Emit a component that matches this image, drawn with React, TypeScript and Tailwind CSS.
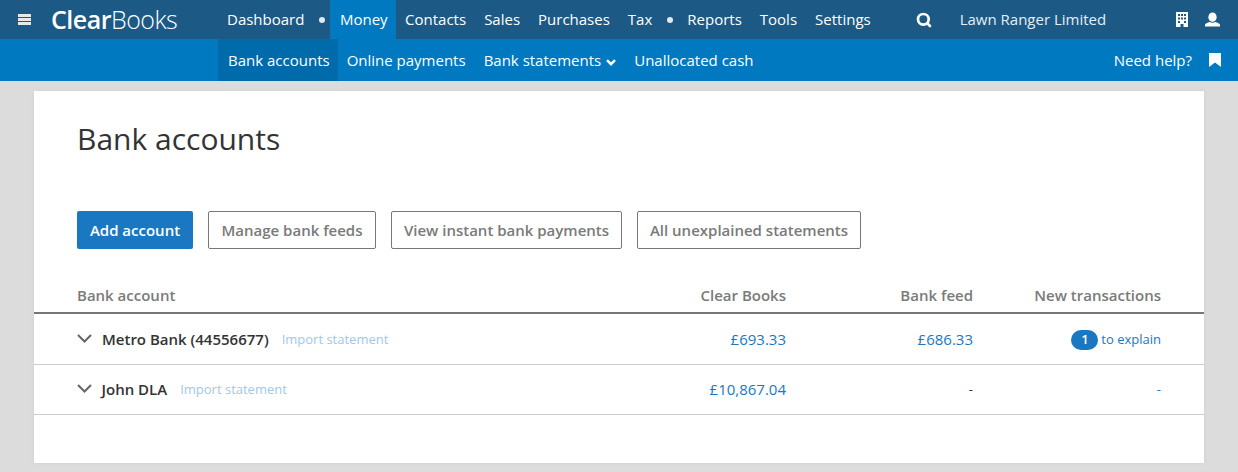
import { Search } from 'lucide-react';

const mainNav = [
  { label: 'Dashboard', dot: true },
  { label: 'Money', active: true },
  { label: 'Contacts' },
  { label: 'Sales' },
  { label: 'Purchases' },
  { label: 'Tax', dot: true },
  { label: 'Reports' },
  { label: 'Tools' },
  { label: 'Settings' },
];

function BuildingIcon() {
  return (
    <svg width="12" height="15" viewBox="0 0 12 15" fill="#fff">
      <path d="M0 0h12v15H7.500v-3h-3v3H0z M2 2v2h2V2z M5 2v2h2V2z M8 2v2h2V2z M2 5.500v2h2v-2z M5 5.500v2h2v-2z M8 5.500v2h2v-2z M2 9v2h2V9z M8 9v2h2V9z" fillRule="evenodd" />
    </svg>
  );
}

function UserIcon() {
  return (
    <svg width="15" height="15" viewBox="0 0 16 15" fill="#fff">
      <ellipse cx="8" cy="5" rx="4.400" ry="5" />
      <path d="M0 15v-1.600c0-1.600 2.600-2.600 5-3.200 1.800 1 4.200 1 6 0 2.400.6 5 1.600 5 3.200V15z" />
    </svg>
  );
}

function BookmarkIcon() {
  return (
    <svg width="12" height="14" viewBox="0 0 12 14" fill="#fff">
      <path d="M0 0h12v14L6 9.500 0 14z" />
    </svg>
  );
}

function Caret({ className }: { className?: string }) {
  return (
    <svg width="10" height="7" viewBox="0 0 10 7" fill="none" stroke="#fff" strokeWidth="2.400" className={className}>
      <path d="M1 1.200l4 4 4-4" />
    </svg>
  );
}

function RowChevron() {
  return (
    <svg width="15" height="9" viewBox="0 0 15 9" fill="none" stroke="#666" strokeWidth="2" className="mb-[3px] shrink-0">
      <path d="M1 1l6.500 6.500L14 1" />
    </svg>
  );
}

export default function App() {
  return (
    <div className="h-[472px] w-[1238px] overflow-hidden bg-[#dcdcdc] font-['Open_Sans',sans-serif] text-[15px]">
      {/* Top nav */}
      <header className="flex h-[39px] items-center bg-[#1c5a85] text-white">
        <div className="flex w-[218px] items-center pl-[18px]">
          <div className="flex w-[13px] flex-col gap-[1px]">
            <span className="h-[3px] bg-[#e8e8e8]" />
            <span className="h-[3px] bg-[#e8e8e8]" />
            <span className="h-[3px] bg-[#e8e8e8]" />
          </div>
          <span className="ml-[20px] text-[25px] leading-none tracking-[-0.5px]">
            <span className="font-semibold">Clear</span>
            <span className="font-light">Books</span>
          </span>
        </div>
        <nav className="flex h-full items-center">
          {mainNav.map((item) => (
            <div key={item.label} className="flex h-full items-center">
              <a className={item.active ? 'flex h-full items-center bg-[#0079c1] pl-[9.500px] pr-[8.500px]' : 'flex h-full items-center px-[9px]'}>
                {item.label}
              </a>
              {item.dot && <span className="ml-[6px] mr-[5px] h-[6px] w-[6px] rounded-full bg-[#dfe9f0]" />}
            </div>
          ))}
        </nav>
        <Search className="ml-[36px] h-[16px] w-[16px]" strokeWidth={4} />
        <span className="ml-[28px] text-[#e6eef4]">Lawn Ranger Limited</span>
        <div className="ml-auto flex items-center gap-[17px] pr-[18px]">
          <BuildingIcon />
          <UserIcon />
        </div>
      </header>

      {/* Sub nav */}
      <div className="flex h-[42px] items-center bg-[#0079c1] pl-[218px] text-white">
        <a className="flex h-full items-center bg-[#006bab] pl-[10px] pr-[8px]">Bank accounts</a>
        <a className="ml-[9px]">Online payments</a>
        <a className="ml-[18px] flex items-center gap-[5px]">
          Bank statements
          <Caret className="mt-[4px]" />
        </a>
        <a className="ml-[18px]">Unallocated cash</a>
        <div className="ml-auto flex items-center gap-[17px] pr-[17px]">
          <span>Need help?</span>
          <BookmarkIcon />
        </div>
      </div>

      {/* Card */}
      <main className="mx-[34px] mt-[10px] h-[372px] w-[1170px] bg-white shadow-[0_0_4px_rgba(0,0,0,0.06)]">
        <h1 className="pl-[43px] pt-[27px] text-[30px] font-normal leading-[42px] text-[#333]">Bank accounts</h1>

        <div className="mt-[51px] flex gap-[15px] pl-[43px] text-[15px] font-semibold">
          <button className="h-[38px] w-[116px] rounded-[2px] bg-[#1a78c2] text-white">Add account</button>
          <button className="h-[38px] w-[168px] rounded-[2px] border border-[#777] bg-white text-[#7a7a7a]">Manage bank feeds</button>
          <button className="h-[38px] w-[231px] rounded-[2px] border border-[#777] bg-white text-[#7a7a7a]">View instant bank payments</button>
          <button className="h-[38px] w-[224px] rounded-[2px] border border-[#777] bg-white text-[#7a7a7a]">All unexplained statements</button>
        </div>

        {/* Table */}
        <div className="mt-[26px] flex h-[39px] items-center border-b-2 border-[#777] pl-[43px] pr-[43px] pt-[4px] font-semibold text-[#7a7a7a]">
          <span className="flex-1">Bank account</span>
          <span className="w-[150px] text-right">Clear Books</span>
          <span className="w-[187px] text-right">Bank feed</span>
          <span className="w-[188px] text-right">New transactions</span>
        </div>

        <div className="flex h-[51px] items-center border-b border-[#ccc] pl-[43px] pr-[43px] pt-[1px]">
          <div className="flex flex-1 items-center">
            <RowChevron />
            <span className="ml-[10px] font-semibold text-[#333]">Metro Bank (44556677)</span>
            <span className="ml-[13px] mt-[1px] text-[13px] text-[#a0c8e8]">Import statement</span>
          </div>
          <span className="w-[150px] text-right text-[#1a78c2]">£693.33</span>
          <span className="w-[187px] text-right text-[#1a78c2]">£686.33</span>
          <div className="flex w-[188px] items-center justify-end text-[13px] text-[#1a78c2]">
            <span className="flex h-[20px] w-[27px] items-center justify-center rounded-full bg-[#1a78c2] font-semibold text-white">1</span>
            <span className="ml-[3px] mt-[1px]">to explain</span>
          </div>
        </div>

        <div className="flex h-[50px] items-center border-b border-[#ccc] pl-[43px] pr-[43px]">
          <div className="flex flex-1 items-center">
            <RowChevron />
            <span className="ml-[9.500px] font-semibold text-[#333]">John DLA</span>
            <span className="ml-[13px] mt-[1px] text-[13px] text-[#a0c8e8]">Import statement</span>
          </div>
          <span className="w-[150px] text-right text-[#1a78c2]">£10,867.04</span>
          <span className="w-[187px] text-right text-[13px] text-[#333]">-</span>
          <span className="w-[188px] text-right text-[13px] text-[#1a78c2]">-</span>
        </div>
      </main>
    </div>
  );
}
